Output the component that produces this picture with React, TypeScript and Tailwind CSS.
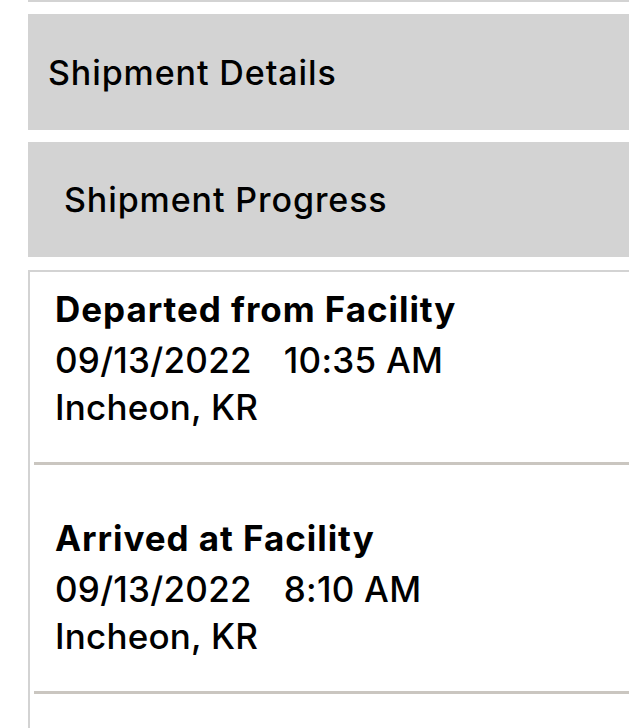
import React from "react";

const items = [
  { title: "Departed from Facility", date: "09/13/2022", time: "10:35 AM", loc: "Incheon, KR" },
  { title: "Arrived at Facility", date: "09/13/2022", time: "8:10 AM", loc: "Incheon, KR" },
];

export default function App() {
  return (
    <div className="w-[629px] h-[728px] overflow-hidden bg-white text-black font-['Inter',_'Roboto',_sans-serif]">
      <div className="ml-[28px] h-[2px] bg-[#d3d3d3]" />
      <div className="ml-[28px] mt-[12px] h-[116px] bg-[#d3d3d3] flex items-center pl-[20px] text-[34px] font-medium tracking-[0.9px]">
        Shipment Details
      </div>
      <div className="ml-[28px] mt-[12px] h-[115px] bg-[#d3d3d3] flex items-center pl-[36px] text-[34px] font-medium tracking-[0.9px]">
        Shipment Progress
      </div>
      <div className="ml-[28px] mt-[13px] border-l-2 border-t-2 border-[#d3d3d3] pl-[4px] pb-[200px]">
        {items.map((it, i) => (
          <div key={i}>
            <div className={`pl-[21px] ${i === 0 ? "pt-[13px]" : "pt-[49px]"} pb-[32px]`}>
              <div className="text-[35px] font-bold leading-[48px] tracking-[0.95px]">{it.title}</div>
              <div className="text-[35px] font-medium leading-[47px] mt-[4px] tracking-[0.25px]">
                <span>{it.date}</span>
                <span className="ml-[32px]">{it.time}</span>
              </div>
              <div className="text-[35px] font-medium leading-[46px] tracking-[0.2px]">{it.loc}</div>
            </div>
            <div className="h-[3px] bg-[#cac6c0]" />
          </div>
        ))}
      </div>
    </div>
  );
}
